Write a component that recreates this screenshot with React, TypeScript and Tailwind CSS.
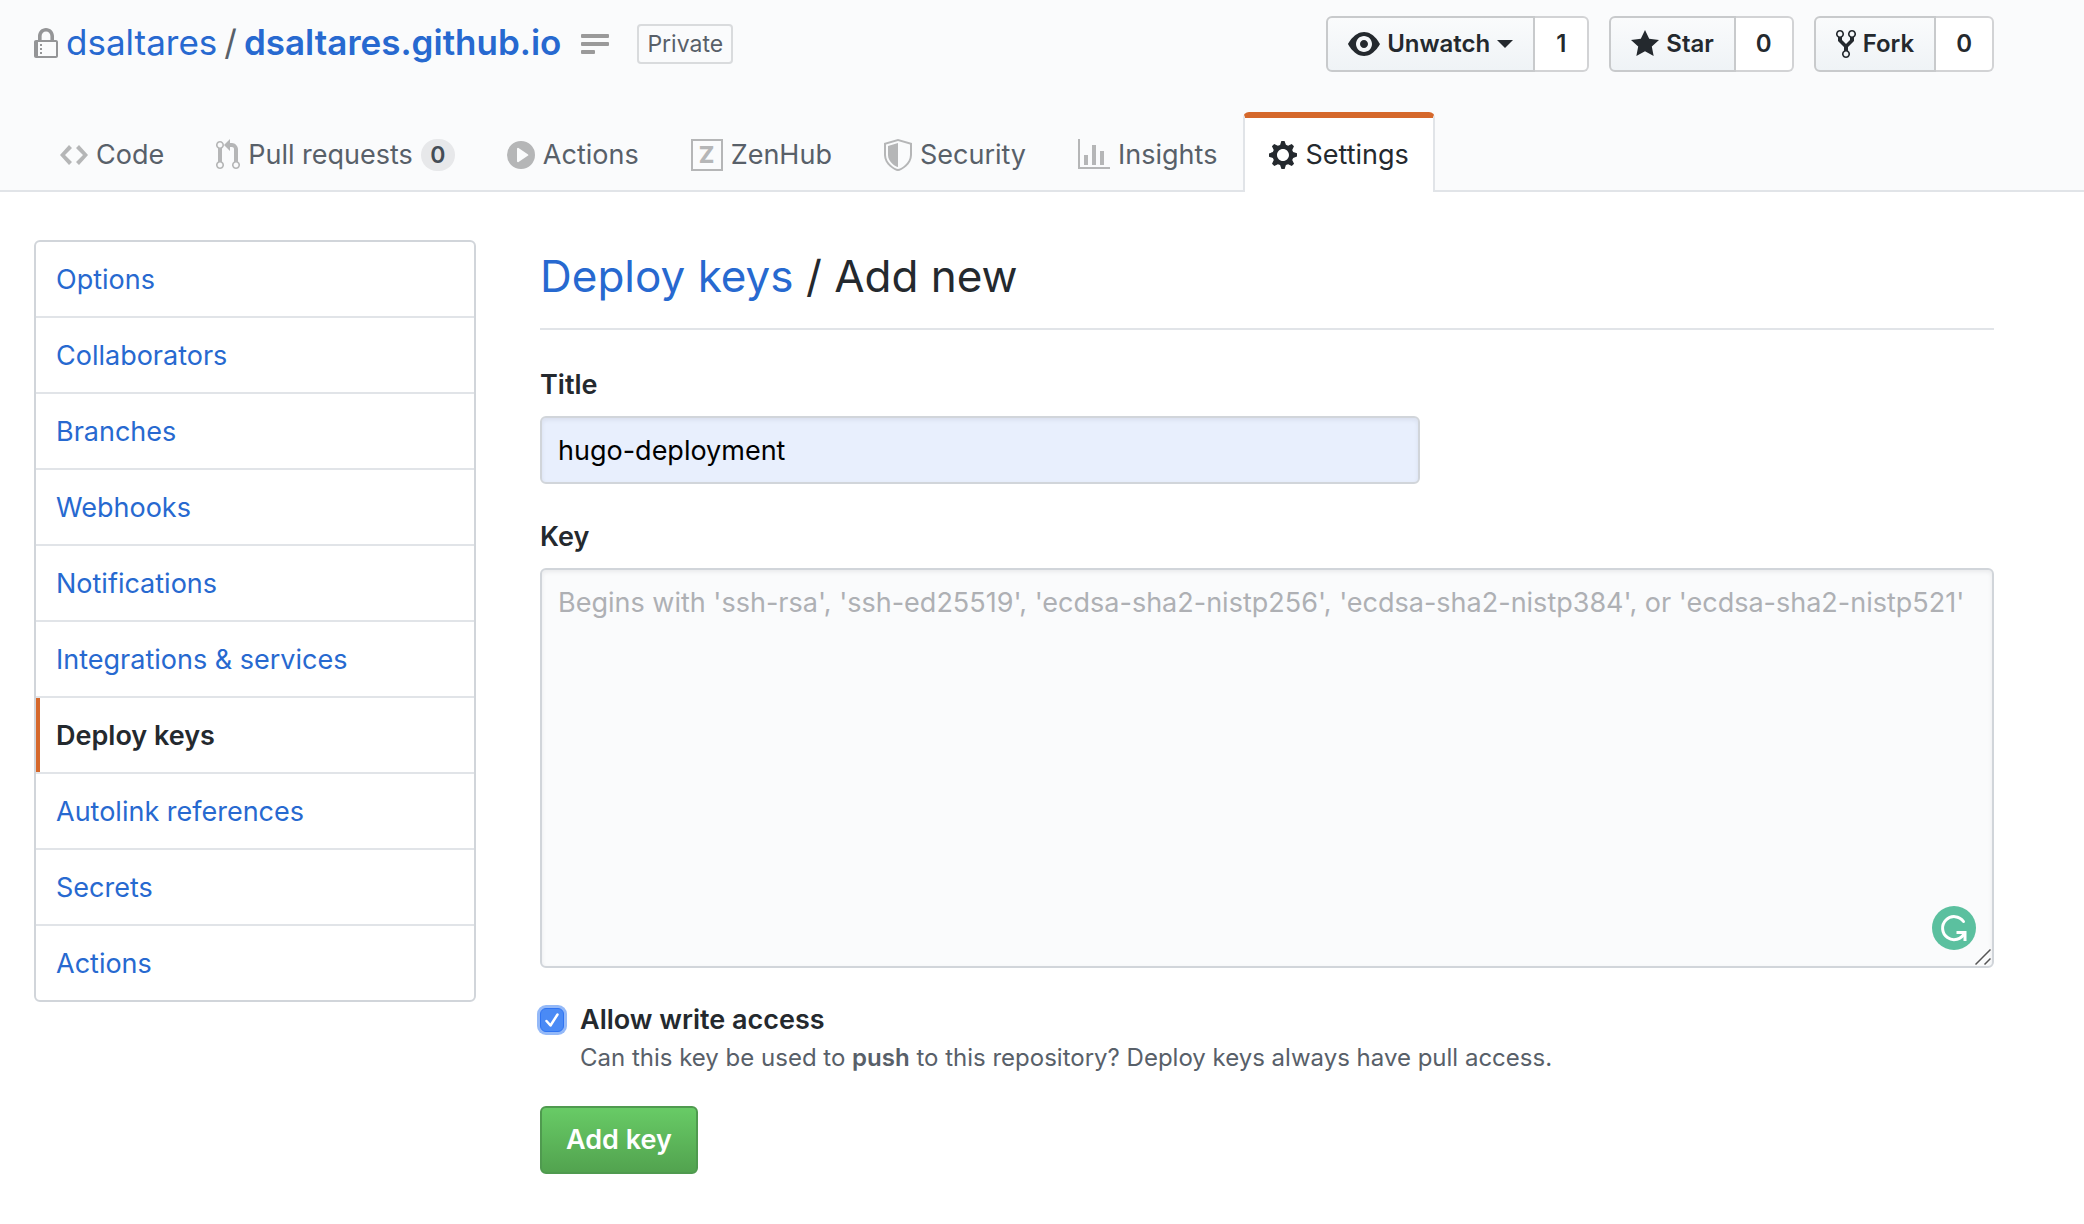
import type { ReactNode } from "react";

type IconProps = { d: string; w: number; className: string };

const Icon = ({ d, w, className }: IconProps) => (
  <svg viewBox={`0 0 ${w} 16`} fill="currentColor" fillRule="evenodd" aria-hidden="true" className={className}>
    <path d={d} />
  </svg>
);

const icons = {
  lock: "M4 13H3v-1h1v1zm8-6v7c0 .55-.45 1-1 1H1c-.55 0-1-.45-1-1V7c0-.55.45-1 1-1h1V4c0-2.2 1.8-4 4-4s4 1.8 4 4v2h1c.55 0 1 .45 1 1zM3.8 6h4.41V4c0-1.22-.98-2.2-2.2-2.2-1.22 0-2.2.98-2.2 2.2v2H3.8zM11 7H2v7h9V7zM4 8H3v1h1V8zm0 2H3v1h1v-1z",
  eye: "M8.06 2C3 2 0 8 0 8s3 6 8.06 6C13 14 16 8 16 8s-3-6-7.94-6zM8 12c-2.2 0-4-1.78-4-4 0-2.2 1.8-4 4-4 2.22 0 4 1.8 4 4 0 2.22-1.78 4-4 4zm2-4c0 1.11-.89 2-2 2-1.11 0-2-.89-2-2 0-1.11.89-2 2-2 1.11 0 2 .89 2 2z",
  star: "M14 6l-4.9-.64L7 1 4.9 5.36 0 6l3.6 3.26L2.67 14 7 11.67 11.33 14l-.93-4.74L14 6z",
  fork: "M8 1a1.993 1.993 0 0 0-1 3.72V6L5 8 3 6V4.72A1.993 1.993 0 0 0 2 1a1.993 1.993 0 0 0-1 3.72V6.5l3 3v1.78A1.993 1.993 0 0 0 5 15a1.993 1.993 0 0 0 1-3.72V9.5l3-3V4.72A1.993 1.993 0 0 0 8 1zM2 4.2C1.34 4.2.8 3.65.8 3c0-.65.55-1.2 1.2-1.2.65 0 1.2.55 1.2 1.2 0 .65-.55 1.2-1.2 1.2zm3 10c-.66 0-1.2-.55-1.2-1.2 0-.65.55-1.2 1.2-1.2.65 0 1.2.55 1.2 1.2 0 .65-.55 1.2-1.2 1.2zm3-10c-.66 0-1.2-.55-1.2-1.2 0-.65.55-1.2 1.2-1.2.65 0 1.2.55 1.2 1.2 0 .65-.55 1.2-1.2 1.2z",
  code: "M9.5 3L8 4.5 11.5 8 8 11.5 9.5 13 14 8 9.5 3zm-5 0L0 8l4.5 5L6 11.5 2.5 8 6 4.5 4.5 3z",
  pull: "M11 11.28V5c-.03-.78-.34-1.47-.94-2.06C9.46 2.35 8.78 2.03 8 2H7V0L4 3l3 3V4h1c.27.02.48.11.69.31.21.2.3.42.31.69v6.28A1.993 1.993 0 0 0 10 15a1.993 1.993 0 0 0 1-3.72zm-1 2.92c-.66 0-1.2-.55-1.2-1.2 0-.65.55-1.2 1.2-1.2.65 0 1.2.55 1.2 1.2 0 .65-.55 1.2-1.2 1.2zM4 3c0-1.11-.89-2-2-2a1.993 1.993 0 0 0-1 3.72v6.56A1.993 1.993 0 0 0 2 15a1.993 1.993 0 0 0 1-3.72V4.72c.59-.34 1-.98 1-1.72zm-.8 10c0 .66-.55 1.2-1.2 1.2-.65 0-1.2-.55-1.2-1.2 0-.65.55-1.2 1.2-1.2.65 0 1.2.55 1.2 1.2zM2 4.2C1.34 4.2.8 3.65.8 3c0-.65.55-1.2 1.2-1.2.65 0 1.2.55 1.2 1.2 0 .65-.55 1.2-1.2 1.2z",
  play: "M14 8A7 7 0 1 1 0 8a7 7 0 0 1 14 0zm-8.223 3.482l4.599-3.066a.5.5 0 0 0 0-.832L5.777 4.518A.5.5 0 0 0 5 4.934v6.132a.5.5 0 0 0 .777.416z",
  shield: "M0 2l7-2 7 2v6.02C14 12.69 8.69 16 7 16c-1.69 0-7-3.31-7-7.98V2zm1 .75L7 1l6 1.75v5.268C13 12.104 8.449 15 7 15c-1.449 0-6-2.896-6-6.982V2.75zm1 .75L7 2v12c-1.207 0-5-2.482-5-5.985V3.5z",
  graph: "M16 14v1H0V0h1v14h15zM5 13H3V8h2v5zm4 0H7V3h2v10zm4 0h-2V6h2v7z",
  gear: "M14 8.77v-1.6l-1.94-.64-.45-1.09.88-1.84-1.13-1.13-1.81.91-1.09-.45-.69-1.92h-1.6l-.63 1.94-1.11.45-1.84-.88-1.13 1.13.91 1.81-.45 1.09L0 7.23v1.59l1.94.64.45 1.09-.88 1.84 1.13 1.13 1.81-.91 1.09.45.69 1.92h1.59l.63-1.94 1.11-.45 1.84.88 1.13-1.13-.92-1.81.47-1.09L14 8.75v.02zM7 11c-1.66 0-3-1.34-3-3s1.34-3 3-3 3 1.34 3 3-1.34 3-3 3z",
};

const tabs: { label: string; icon: ReactNode; count?: number; active?: boolean }[] = [
  { label: "Code", icon: <Icon d={icons.code} w={14} className="h-8 w-7 text-[#b5b6b7]" /> },
  { label: "Pull requests", icon: <Icon d={icons.pull} w={12} className="h-8 w-6 text-[#b5b6b7]" />, count: 0 },
  { label: "Actions", icon: <Icon d={icons.play} w={14} className="h-8 w-7 text-[#b5b6b7]" /> },
  {
    label: "ZenHub",
    icon: (
      <span
        aria-hidden="true"
        className="flex size-8 items-center justify-center border-2 border-[#b5b6b7] text-[23px] leading-none font-extrabold text-[#b5b6b7]"
      >
        Z
      </span>
    ),
  },
  { label: "Security", icon: <Icon d={icons.shield} w={14} className="h-8 w-7 text-[#b5b6b7]" /> },
  { label: "Insights", icon: <Icon d={icons.graph} w={16} className="size-8 text-[#b5b6b7]" /> },
  { label: "Settings", icon: <Icon d={icons.gear} w={14} className="h-8 w-7" />, active: true },
];

const menu = [
  "Options",
  "Collaborators",
  "Branches",
  "Webhooks",
  "Notifications",
  "Integrations & services",
  "Deploy keys",
  "Autolink references",
  "Secrets",
  "Actions",
];

function CountButton({ icon, label, count, caret }: { icon: ReactNode; label: string; count: number; caret?: boolean }) {
  return (
    <div className="flex h-14 text-[24px] font-semibold text-[#24292e]">
      <button
        type="button"
        className="flex items-center gap-[7px] rounded-l-md border-2 border-[#c8cacc] bg-linear-to-b from-[#fafbfc] to-[#eff3f6] px-5"
      >
        {icon}
        {label}
        {caret && <span className="border-x-8 border-t-8 border-x-transparent border-t-[#24292e]" />}
      </button>
      <a
        href="#count"
        className="flex min-w-[54px] items-center justify-center rounded-r-md border-2 border-l-0 border-[#d2d3d5] bg-white px-5"
      >
        {count}
      </a>
    </div>
  );
}

export default function App() {
  return (
    <div className="min-h-screen bg-white font-['Inter',sans-serif] text-[27px] leading-[42px] text-[#24292e]">
      <header className="border-b-2 border-[#e1e4e8] bg-[#fafbfc] pr-[90px] pl-[34px]">
        <div className="flex items-start justify-between pt-4">
          <h1 className="flex h-14 items-center text-[#586069]">
            <Icon d={icons.lock} w={12} className="mr-2 h-8 w-6 text-[#949597]" />
            <span className="flex gap-[7px] pb-1 text-[35px] leading-[52px]">
              <a href="#owner" className="text-[#2769d0]">dsaltares</a>
              <span>/</span>
              <a href="#repo" className="font-semibold text-[#2769d0]">dsaltares.github.io</a>
            </span>
            <svg viewBox="0 0 28 20" aria-hidden="true" className="mr-7 ml-5 h-5 w-7 text-[#9a9a9a]" fill="currentColor">
              <rect width="28" height="4" rx="1" />
              <rect y="8" width="28" height="4" rx="1" />
              <rect y="16" width="14" height="4" rx="1" />
            </svg>
            <span className="rounded border-2 border-[#d9dbdd] px-2 text-[23px] leading-9">Private</span>
          </h1>
          <div className="flex gap-5">
            <CountButton icon={<Icon d={icons.eye} w={16} className="size-8" />} label="Unwatch" count={1} caret />
            <CountButton icon={<Icon d={icons.star} w={14} className="h-8 w-7" />} label="Star" count={0} />
            <CountButton icon={<Icon d={icons.fork} w={10} className="h-8 w-5" />} label="Fork" count={0} />
          </div>
        </div>
        <nav aria-label="Repository" className="-mb-0.5 flex pt-10">
          {tabs.map((t) => (
            <a
              key={t.label}
              href="#tab"
              aria-current={t.active ? "page" : undefined}
              className={
                t.active
                  ? "flex h-20 items-center gap-2 rounded-t-md border-x-2 border-t-6 border-x-[#e1e4e8] border-t-[#d5682b] bg-white px-6"
                  : "flex h-20 items-center gap-2 border-x-2 border-t-6 border-transparent px-6 text-[#586069]"
              }
            >
              {t.icon}
              {t.label}
              {t.count !== undefined && (
                <span className="flex h-8 min-w-[34px] items-center justify-center rounded-full bg-[#e7e8ea] text-[23px] font-semibold text-[#444d56]">
                  {t.count}
                </span>
              )}
            </a>
          ))}
        </nav>
      </header>

      <div className="flex items-start gap-16 pt-12 pr-[90px] pl-[34px]">
        <nav aria-label="Settings" className="w-[442px] shrink-0 overflow-hidden rounded-md border-2 border-[#d1d5da]">
          {menu.map((m) => (
            <a
              key={m}
              href="#menu"
              aria-current={m === "Deploy keys" ? "page" : undefined}
              className={
                m === "Deploy keys"
                  ? "block border-b-2 border-[#e1e4e8] pt-[17px] pb-[15px] pl-5 font-semibold shadow-[inset_4px_0_0_#d5682b]"
                  : "block border-b-2 border-[#e1e4e8] pt-[17px] pb-[15px] pl-5 text-[#2769d0] last:border-b-0"
              }
            >
              {m}
            </a>
          ))}
        </nav>

        <main className="min-w-0 flex-1">
          <h2 className="border-b-2 border-[#e1e4e8] pb-4 text-[44px] leading-[72px]">
            <a href="#keys" className="text-[#2769d0]">Deploy keys</a> / Add new
          </h2>
          <form className="pt-[34px]" onSubmit={(e) => e.preventDefault()}>
            <label htmlFor="title" className="block font-semibold">Title</label>
            <input
              id="title"
              type="text"
              defaultValue="hugo-deployment"
              className="mt-2.5 block h-[68px] w-[880px] max-w-full rounded-md border-2 border-[#d1d5da] bg-[#e8effd] px-4 text-black shadow-[inset_0_2px_4px_rgba(27,31,35,0.075)] outline-none"
            />
            <label htmlFor="key" className="mt-8 block font-semibold">Key</label>
            <div className="relative mt-2.5">
              <textarea
                id="key"
                placeholder="Begins with 'ssh-rsa', 'ssh-ed25519', 'ecdsa-sha2-nistp256', 'ecdsa-sha2-nistp384', or 'ecdsa-sha2-nistp521'"
                className="block h-[400px] w-full resize-none rounded-md border-2 border-[#d1d5da] bg-[#fafbfc] px-4 py-3 shadow-[inset_0_2px_4px_rgba(27,31,35,0.075)] outline-none placeholder:text-[#aeb0b4]"
              />
              <svg viewBox="0 0 44 44" aria-hidden="true" className="absolute right-[18px] bottom-[18px] size-11" fill="none">
                <circle cx="22" cy="22" r="22" fill="#5bc09f" />
                <path d="M31.500 15.500A11.500 11.500 0 1 0 32.500 27" stroke="#fff" strokeWidth="3" strokeLinecap="round" />
                <path d="M26 26.500h7v7" stroke="#fff" strokeWidth="3" strokeLinecap="square" />
              </svg>
              <svg viewBox="0 0 16 16" aria-hidden="true" className="absolute right-[3px] bottom-[3px] size-4" stroke="#555" strokeWidth="1.5">
                <path d="M0.5 15.5L15.5 0.5M9.5 15.5L15.5 9.5" />
              </svg>
            </div>
            <div className="mt-8 flex items-start gap-4">
              <span className="relative mt-2 flex size-6 shrink-0">
                <input
                  id="write"
                  type="checkbox"
                  defaultChecked
                  className="peer size-6 appearance-none rounded-md border border-[#2f74f2] bg-white ring-3 ring-[#94b9f8] checked:bg-[#4a8af5]"
                />
                <svg
                  viewBox="0 0 24 24"
                  aria-hidden="true"
                  className="pointer-events-none absolute inset-0 hidden size-6 peer-checked:block"
                  fill="none"
                >
                  <path d="M6.500 13l4 4.500L17.500 6.500" stroke="#fff" strokeWidth="2.5" strokeLinecap="round" strokeLinejoin="round" />
                </svg>
              </span>
              <div>
                <label htmlFor="write" className="block leading-10 font-semibold">Allow write access</label>
                <p className="text-[24px] leading-9 text-[#586069]">
                  Can this key be used to <strong className="font-semibold">push</strong> to this repository? Deploy keys always have pull access.
                </p>
              </div>
            </div>
            <button
              type="submit"
              className="mt-[30px] h-[68px] rounded-md border-2 border-[#4f9a4f] bg-linear-to-b from-[#68cb66] to-[#52a34f] px-6 font-semibold text-white"
            >
              Add key
            </button>
          </form>
        </main>
      </div>
    </div>
  );
}
